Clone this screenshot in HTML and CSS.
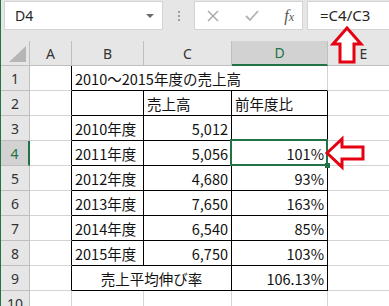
FILE: index.html
```html
<!DOCTYPE html>
<html lang="ja">
<head>
    <meta charset="UTF-8">
    <title>売上高</title>
    <link rel="stylesheet" href="styles.css">
</head>
<body>
    <div class="excel">
        <div class="formula-bar">
            <div class="name-box">
                <span>D4</span>
                <i class="caret"></i>
            </div>
            <div class="grip"><i></i><i></i><i></i></div>
            <div class="fx-buttons">
                <svg class="btn-icon" width="12" height="12" viewBox="0 0 12 12">
                    <path d="M1 1L11 11M11 1L1 11" stroke="#a6a6a6" stroke-width="1.4" fill="none"/>
                </svg>
                <svg class="btn-icon" width="14" height="11" viewBox="0 0 14 11">
                    <path d="M1 6L5 10L13 1" stroke="#b3b3b3" stroke-width="1.8" fill="none"/>
                </svg>
                <span class="fx">f<small>x</small></span>
            </div>
            <div class="formula">=C4/C3</div>
        </div>

        <div class="sheet">
            <div class="corner"><i></i></div>
            <div class="col-head">A</div>
            <div class="col-head">B</div>
            <div class="col-head">C</div>
            <div class="col-head active">D</div>
            <div class="col-head">E</div>

            <div class="row-head">1</div>
            <div class="cell edge-r"></div>
            <div class="cell title edge-b">2010～2015年度の売上高</div>
            <div class="cell"></div>

            <div class="row-head">2</div>
            <div class="cell edge-r"></div>
            <div class="cell box"></div>
            <div class="cell box">売上高</div>
            <div class="cell box">前年度比</div>
            <div class="cell"></div>

            <div class="row-head">3</div>
            <div class="cell edge-r"></div>
            <div class="cell box">2010年度</div>
            <div class="cell box num">5,012</div>
            <div class="cell box num"></div>
            <div class="cell"></div>

            <div class="row-head active">4</div>
            <div class="cell edge-r"></div>
            <div class="cell box">2011年度</div>
            <div class="cell box num">5,056</div>
            <div class="cell box num selected">101%</div>
            <div class="cell"></div>

            <div class="row-head">5</div>
            <div class="cell edge-r"></div>
            <div class="cell box">2012年度</div>
            <div class="cell box num">4,680</div>
            <div class="cell box num">93%</div>
            <div class="cell"></div>

            <div class="row-head">6</div>
            <div class="cell edge-r"></div>
            <div class="cell box">2013年度</div>
            <div class="cell box num">7,650</div>
            <div class="cell box num">163%</div>
            <div class="cell"></div>

            <div class="row-head">7</div>
            <div class="cell edge-r"></div>
            <div class="cell box">2014年度</div>
            <div class="cell box num">6,540</div>
            <div class="cell box num">85%</div>
            <div class="cell"></div>

            <div class="row-head">8</div>
            <div class="cell edge-r"></div>
            <div class="cell box">2015年度</div>
            <div class="cell box num">6,750</div>
            <div class="cell box num">103%</div>
            <div class="cell"></div>

            <div class="row-head">9</div>
            <div class="cell edge-r"></div>
            <div class="cell box merged">売上平均伸び率</div>
            <div class="cell box num">106.13%</div>
            <div class="cell"></div>

            <div class="row-head">10</div>
            <div class="cell"></div>
            <div class="cell"></div>
            <div class="cell"></div>
            <div class="cell"></div>
            <div class="cell"></div>
        </div>

        <!-- callout arrows drawn over the sheet -->
        <svg class="marks" width="389" height="306" viewBox="0 0 389 306">
            <polygon points="347,28 361,44 354,44 354,62 340,62 340,44 333,44"
                     fill="#ffffff" stroke="#e50012" stroke-width="3" stroke-linejoin="miter"/>
            <polygon points="327,153 342,139 342,147 363,147 363,159 342,159 342,167"
                     fill="#ffffff" stroke="#e50012" stroke-width="3" stroke-linejoin="miter"/>
        </svg>
    </div>
</body>
</html>
```

FILE: styles.css
```css
body {
    margin: 0;
    background: #ffffff;
}
.excel {
    position: relative;
    width: 389px;
    height: 306px;
    overflow: hidden;
    border-left: 1px solid #217346;
    box-sizing: border-box;
    font-family: "Noto Sans CJK JP", sans-serif;
}

/* formula bar */
.formula-bar {
    display: flex;
    align-items: flex-start;
    height: 41px;
    padding-top: 1px;
    box-sizing: border-box;
    background: #e6e6e6;
    font-family: "Noto Sans", "Open Sans", sans-serif;
}
.name-box {
    display: flex;
    align-items: center;
    justify-content: space-between;
    width: 159px;
    height: 29px;
    margin-left: 3px;
    padding: 0 8px 0 10px;
    box-sizing: border-box;
    background: #ffffff;
    border: 1px solid #d4d4d4;
    font-size: 14px;
    color: #262626;
}
.caret {
    width: 0;
    height: 0;
    border-left: 4px solid transparent;
    border-right: 4px solid transparent;
    border-top: 4px solid #6b6b6b;
}
.grip {
    display: flex;
    flex-direction: column;
    align-items: center;
    gap: 2px;
    width: 31px;
    padding-top: 10px;
}
.grip i {
    width: 2px;
    height: 2px;
    background: #a0a0a0;
}
.fx-buttons {
    display: flex;
    align-items: center;
    justify-content: space-between;
    width: 109px;
    height: 29px;
    padding: 0 8px 0 12px;
    box-sizing: border-box;
    background: #ffffff;
    border: 1px solid #d4d4d4;
}
.fx {
    font-family: "Liberation Serif", serif;
    font-style: italic;
    font-size: 16px;
    color: #555555;
}
.fx small {
    font-size: 12px;
}
.formula {
    flex: 1;
    height: 29px;
    margin-left: 4px;
    padding-left: 12px;
    box-sizing: border-box;
    background: #ffffff;
    border: 1px solid #d4d4d4;
    border-right: none;
    font-size: 15px;
    line-height: 27px;
    color: #262626;
}

/* sheet grid */
.sheet {
    display: grid;
    grid-template-columns: 29px 42px 72px 88px 96px 72px;
    grid-auto-rows: 25px;
}
.sheet > div {
    box-sizing: border-box;
    border-right: 1px solid #d4d4d4;
    border-bottom: 1px solid #d4d4d4;
}
.corner, .col-head, .row-head {
    background: #e6e6e6;
    color: #333333;
    font-family: "Noto Sans", "Open Sans", sans-serif;
    font-size: 14px;
}
.sheet > .corner, .sheet > .col-head, .sheet > .row-head {
    border-color: #bfbfbf;
}
.corner {
    position: relative;
}
.corner i {
    position: absolute;
    right: 3px;
    bottom: 3px;
    width: 17px;
    height: 16px;
    background: #b6b6b6;
    clip-path: polygon(100% 0, 100% 100%, 0 100%);
}
.col-head {
    display: flex;
    align-items: center;
    justify-content: center;
}
.row-head {
    display: flex;
    align-items: center;
    justify-content: center;
}
.sheet > .col-head.active {
    background: #d2d2d2;
    color: #217346;
    border-bottom: 2px solid #217346;
}
.sheet > .row-head.active {
    background: #d2d2d2;
    color: #217346;
    border-right: 2px solid #217346;
}

.cell {
    display: flex;
    align-items: center;
    padding: 1px 3px 0 3px;
    font-size: 14.5px;
    color: #111111;
    white-space: nowrap;
}
.num {
    justify-content: flex-end;
}
.title {
    grid-column: span 3;
}
.merged {
    grid-column: span 2;
    justify-content: center;
}
.sheet > .edge-r {
    border-right-color: #000000;
}
.sheet > .edge-b {
    border-bottom-color: #000000;
}
.sheet > .box {
    border-right-color: #000000;
    border-bottom-color: #000000;
}
.selected {
    position: relative;
}
.selected::after {
    content: "";
    position: absolute;
    left: -2px;
    top: -2px;
    right: -1px;
    bottom: -1px;
    border: 2px solid #217346;
}
.selected::before {
    content: "";
    position: absolute;
    right: -3px;
    bottom: -3px;
    width: 5px;
    height: 5px;
    background: #217346;
    z-index: 1;
}

.marks {
    position: absolute;
    left: -1px;
    top: 0;
    pointer-events: none;
}
```
